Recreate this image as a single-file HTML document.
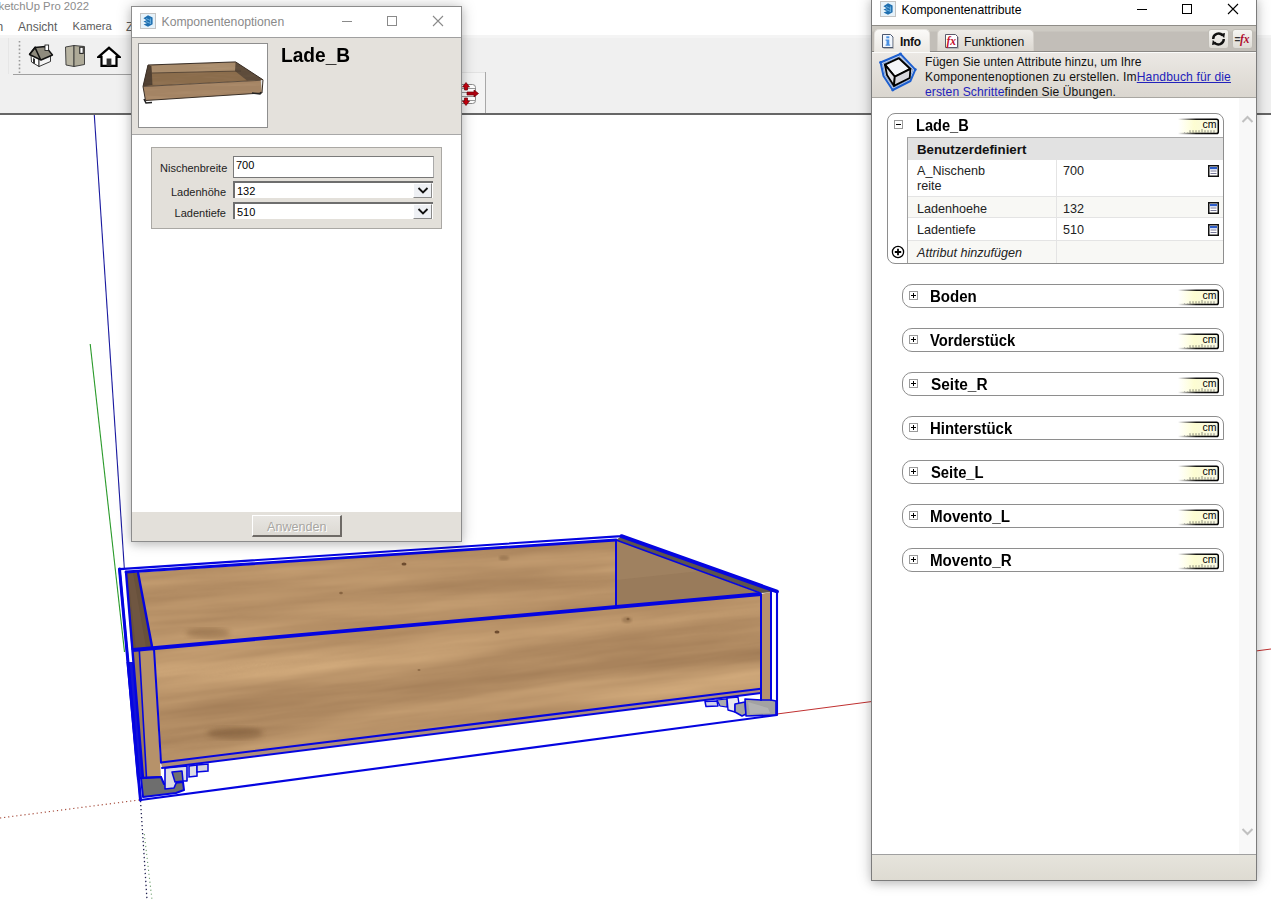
<!DOCTYPE html>
<html><head><meta charset="utf-8">
<style>
*{box-sizing:border-box;margin:0;padding:0}
html,body{width:1271px;height:900px;overflow:hidden;background:#fff;font-family:"Liberation Sans",sans-serif;position:relative}
.a{position:absolute}
.t{position:absolute;white-space:nowrap;line-height:1}
</style></head><body>

<!-- ===== SketchUp main window ===== -->
<div class="t" style="left:-9px;top:1px;font-size:11.3px;color:#8c8c8c">SketchUp Pro 2022</div>
<div class="t" style="left:-3.5px;top:21px;font-size:12px;color:#5c5c5c">n</div>
<div class="t" style="left:18px;top:21px;font-size:12px;color:#5c5c5c">Ansicht</div>
<div class="t" style="left:72.5px;top:21px;font-size:11.2px;color:#5c5c5c">Kamera</div>
<div class="t" style="left:126px;top:21px;font-size:12px;color:#5c5c5c">Z</div>

<!-- toolbar area -->
<div class="a" style="left:0;top:35px;width:1271px;height:79px;background:#f0f0f0"></div>
<div class="a" style="left:8px;top:36px;width:1px;height:38px;background:#e6e6e6"></div>
<div class="a" style="left:13px;top:74px;width:448px;height:1px;background:#a0a0a0"></div><div class="a" style="left:455px;top:72px;width:31px;height:41px;background:#f4f4f4;border-top:1px solid #e2e2e2"></div>
<div class="a" style="left:485px;top:72px;width:1px;height:41px;background:#a8a8a8"></div>
<div class="a" style="left:0;top:113px;width:1271px;height:2px;background:#666"></div><div class="a" style="left:0;top:35px;width:1271px;height:3px;background:#f4f4f4"></div>
<!-- toolbar icons -->
<svg class="a" style="left:18px;top:40px" width="3" height="34" viewBox="0 0 3 34"><path d="M1.5 1 V33" stroke="#9a9a9a" stroke-width="1.6" stroke-dasharray="1.6 2.2"/></svg>
<svg class="a" style="left:28px;top:44px" width="26" height="24" viewBox="0 0 26 24">
  <path d="M3 11 L3.5 18 L11 22.5 L11 14 Z" fill="#fff" stroke="#222" stroke-width="0.9"/>
  <path d="M11 14 L11 22.5 L22.5 17.5 L22.5 11 Z" fill="#f4f4f4" stroke="#222" stroke-width="0.9"/>
  <path d="M5 14 L7 15 L7 20 L5 19 Z" fill="#333"/>
  <path d="M1.5 10.5 L7 3.5 L17.5 2.5 L24.5 11 L13 16 Z" fill="#8f8b7e" stroke="#111" stroke-width="1.4" stroke-linejoin="round"/>
  <path d="M1.5 10.5 L7 3.5 L12.5 15.5" fill="none" stroke="#111" stroke-width="1.6"/>
  <rect x="17" y="1" width="3.6" height="5.5" fill="#fff" stroke="#222" stroke-width="0.9"/>
</svg>
<svg class="a" style="left:64px;top:44px" width="22" height="24" viewBox="0 0 22 24">
  <path d="M1.5 3 L10 1.5 L10 22.5 L2 21 Z" fill="#b9b5a3" stroke="#333" stroke-width="0.9"/>
  <path d="M10 1.5 L20.5 2.5 L20.5 20.5 L10 22.5 Z" fill="#aeaa98" stroke="#333" stroke-width="0.9"/>
  <rect x="15.8" y="3.2" width="3.4" height="6.2" fill="#fff" stroke="#222" stroke-width="1.1"/>
</svg>
<svg class="a" style="left:97px;top:46px" width="24" height="22" viewBox="0 0 24 22">
  <path d="M1.5 10.8 L12 1.8 L22.5 10.8 L19.5 10.8 L19.5 19.8 L4.5 19.8 L4.5 10.8 Z" fill="#fff" stroke="#000" stroke-width="2.2" stroke-linejoin="miter"/>
  <rect x="9.6" y="12.5" width="4.8" height="7.3" fill="#333"/>
</svg>
<svg class="a" style="left:455px;top:80px" width="26" height="28" viewBox="455 80 26 28">
  <rect x="458.5" y="84.5" width="17" height="19" rx="3" fill="#fff" stroke="#8a8a8a" stroke-width="1"/>
  <path d="M459 88.5 H475 M459 92.5 H475 M459 96.5 H475 M459 100.5 H475" stroke="#9a9a9a" stroke-width="1"/>
  <path d="M466 82.5 L469.5 87 L467.5 87 L467.5 90 L464.5 90 L464.5 87 L462.5 87 Z" fill="#d00010" stroke="#700008" stroke-width="0.7"/>
  <path d="M466 105.5 L469.5 101 L467.5 101 L467.5 98 L464.5 98 L464.5 101 L462.5 101 Z" fill="#d00010" stroke="#700008" stroke-width="0.7"/>
  <path d="M478.5 93.5 L474 90 L474 92 L467 92 L467 95 L474 95 L474 97 Z" fill="#b00010" stroke="#700008" stroke-width="0.7"/>
</svg>


<svg class="a" style="left:0;top:0" width="1271" height="900" viewBox="0 0 1271 900">
<defs>
<filter id="woodF" filterUnits="userSpaceOnUse" x="100" y="520" width="700" height="280" color-interpolation-filters="sRGB">
  <feTurbulence type="fractalNoise" baseFrequency="0.0025 0.03" numOctaves="5" seed="11" result="n"/>
  <feColorMatrix in="n" type="matrix" values="0.28 0 0 0 0.585  0.27 0 0 0 0.44  0.22 0 0 0 0.30  0 0 0 0 1"/>
</filter>
<filter id="woodD" filterUnits="userSpaceOnUse" x="100" y="520" width="700" height="280" color-interpolation-filters="sRGB">
  <feTurbulence type="fractalNoise" baseFrequency="0.01 0.05" numOctaves="3" seed="5" result="n"/>
  <feColorMatrix in="n" type="matrix" values="0.4 0 0 0 0.40  0.35 0 0 0 0.30  0.3 0 0 0 0.19  0 0 0 0 1"/>
</filter>
<filter id="blur2"><feGaussianBlur stdDeviation="2.5"/></filter>
<filter id="blur1"><feGaussianBlur stdDeviation="1"/></filter>
<clipPath id="cpFront"><polygon points="154,649 761,594 761,689 161,762.5"/></clipPath>
<clipPath id="cpBack"><polygon points="138,572.5 616,540 616,608 152,649"/></clipPath>
</defs>

<!-- axes -->
<line x1="94.3" y1="115" x2="124.3" y2="568" stroke="#1a1aa0" stroke-width="1.1"/>
<line x1="90.2" y1="344" x2="124.5" y2="652" stroke="#2a9a2a" stroke-width="1.1"/>
<line x1="777" y1="714" x2="1271" y2="649" stroke="#c03030" stroke-width="1"/>
<line x1="0" y1="818" x2="139" y2="800" stroke="#a85040" stroke-width="1.2" stroke-dasharray="1.2 2.9"/>
<line x1="140.5" y1="801" x2="147" y2="900" stroke="#202050" stroke-width="1.3" stroke-dasharray="1.3 2.7"/>
<line x1="144.3" y1="834" x2="152" y2="900" stroke="#70a070" stroke-width="1.1" stroke-dasharray="1.2 2.8"/>

<!-- back panel inner face (textured) -->
<g clip-path="url(#cpBack)">
  <g transform="rotate(-4.2 400 600)"><rect x="100" y="520" width="700" height="280" filter="url(#woodF)"/></g>
  <ellipse cx="208" cy="633" rx="22" ry="5" fill="#6a4a2a" opacity="0.35" filter="url(#blur2)"/>
  <ellipse cx="404" cy="564" rx="2.5" ry="1.5" fill="#5a3a20" opacity="0.8"/>
  <ellipse cx="341" cy="593" rx="1.8" ry="1.2" fill="#6a4a2a" opacity="0.6"/>
  <ellipse cx="504" cy="558" rx="5" ry="2.5" fill="#7a5a3a" opacity="0.4" filter="url(#blur1)"/>
</g>
<!-- right side inner face -->
<polygon points="616,540 757,592 761,594 616,608" fill="#997b5b"/>
<polygon points="616,540 700,571 616,580" fill="#a58866" opacity="0.5"/>
<!-- right side top face -->
<polygon points="621.5,536 777,591.5 761,593 616,540" fill="#5e544c"/>
<!-- left side inner face (dark) -->
<polygon points="126,572 138,572.5 152,649 131.5,650" fill="#68513c"/>
<polygon points="128,573 133,573 146,648 136,649" fill="#745a44" opacity="0.6"/>
<!-- front panel (textured) -->
<g clip-path="url(#cpFront)">
  <g transform="rotate(-6.5 460 680)"><rect x="100" y="520" width="700" height="280" filter="url(#woodF)"/></g>
  <ellipse cx="235" cy="733" rx="28" ry="6" fill="#6a4a2a" opacity="0.4" filter="url(#blur2)"/>
  <ellipse cx="497" cy="632" rx="2.5" ry="1.6" fill="#5a3a20" opacity="0.8"/>
  <ellipse cx="627" cy="620" rx="5" ry="3" fill="#7a5a3a" opacity="0.4" filter="url(#blur1)"/><ellipse cx="628" cy="619" rx="1.5" ry="1.2" fill="#6a4a2a" opacity="0.6"/>
  <ellipse cx="419" cy="670" rx="1.5" ry="1" fill="#6a4a2a" opacity="0.5"/>
</g>
<!-- bottom strip -->
<polygon points="161,762.5 761,688.8 761,693 162,768" fill="#ae8e7a"/>
<!-- left side front edge strip -->
<polygon points="139.3,650 154,649 161,778 146.5,778" fill="#b6926a"/>
<polygon points="132.5,650 139.3,650 146.5,778 143,778" fill="#9a7a5a"/>
<!-- right side front strip -->
<polygon points="761,594 771,592 771,700 761,700" fill="#b5906e"/>
<!-- left bluish region -->
<polygon points="126.5,662 133.6,662 143,778 137,780" fill="#1414d8"/>

<!-- rails -->
<polygon points="141,778 161,777 164,784 183,782 184,790 176,793 143,797" fill="#6e6e6e" stroke="#0505e0" stroke-width="2" stroke-linejoin="round"/>
<polygon points="165,768 187,766 187,781 177,781 174,788 165,789" fill="#dcdce4" stroke="#0505e0" stroke-width="1.6" stroke-linejoin="round"/>
<polygon points="172,772 182,771 183,781 175,782" fill="#707070" stroke="#0505e0" stroke-width="1.5" stroke-linejoin="round"/>
<polygon points="189,766 197,765 197,776 189,777" fill="#dcdce4" stroke="#0505e0" stroke-width="1.5"/>
<polygon points="197,765 208,764 208,771 197,772" fill="#d4d4dc" stroke="#0505e0" stroke-width="1.5"/>
<polygon points="705,701.5 717,701 718,706 706,706.5" fill="#cfcfe8" stroke="#0505e0" stroke-width="1.5" stroke-linejoin="round"/>
<polygon points="717,700 727,699 727,707 720,706" fill="#acacac" stroke="#0505e0" stroke-width="1.2"/>
<polygon points="727,698 738,697 739,704 735,705 735,712 728,710" fill="#e8e8f0" stroke="#0505e0" stroke-width="1.4" stroke-linejoin="round"/>
<polygon points="735,704 745,702 746,714 742,716 735,712" fill="#a4a4a4" stroke="#0505e0" stroke-width="1.6" stroke-linejoin="round"/>
<polygon points="745,699 761,700 771,700 776,701 776,715 746,716" fill="#a2a2a2" stroke="#0505e0" stroke-width="1.6" stroke-linejoin="round"/>
<polygon points="748,702 768,708 770,713 750,714" fill="#bcbcbc" opacity="0.6"/>
<g stroke="#0505e0" fill="none" stroke-linecap="round" stroke-linejoin="round">
  <!-- bbox -->
  <polyline points="621.5,536.1 777,591.5 777,715 140.5,800 119.5,569.1 621.5,536.1" stroke-width="2.1"/>
  <line x1="621.5" y1="536.1" x2="777" y2="591.5" stroke-width="3.8"/>
  <line x1="119.5" y1="569.1" x2="140.5" y2="800" stroke-width="3"/>
  <line x1="126" y1="572" x2="616" y2="540" stroke-width="2.8"/>
  <line x1="616" y1="540" x2="759" y2="592.5" stroke-width="1.7"/>
  <line x1="133" y1="650" x2="761" y2="594" stroke-width="3.8" stroke-linecap="butt"/>
  <line x1="616" y1="540" x2="616" y2="607" stroke-width="2"/>
  <line x1="138" y1="572.5" x2="152.5" y2="649" stroke-width="2.4"/>
  <line x1="126" y1="572" x2="143" y2="778" stroke-width="2.4"/>
  <line x1="154" y1="649" x2="161" y2="762.5" stroke-width="2"/>
  <line x1="161" y1="762.5" x2="761" y2="688.8" stroke-width="2"/>
  <line x1="162" y1="768" x2="761" y2="693" stroke-width="2"/>
  <line x1="761" y1="594" x2="761" y2="700" stroke-width="2"/>
  <line x1="771" y1="592" x2="771" y2="700" stroke-width="2"/>
  <line x1="139.3" y1="650" x2="146.5" y2="778" stroke-width="1.6"/>
  <line x1="141" y1="778" x2="161" y2="777" stroke-width="2"/>
</g>
</svg>



<!-- ===== Komponentenoptionen dialog ===== -->
<div class="a" style="left:131px;top:6px;width:331px;height:536px;box-shadow:0 0 14px rgba(0,0,0,0.22), 0 3px 8px rgba(0,0,0,0.12);background:#fff;border:1px solid #8c8c8c"></div>
<div class="a" style="left:132px;top:7px;width:329px;height:30px;background:#fff"></div>
<svg class="a" style="left:140px;top:13px" width="16" height="16" viewBox="0 0 16 16">
  <rect x="0.5" y="0.5" width="15" height="15" fill="#e6f2fa" stroke="#c4c4c4"/>
  <path d="M8 2.3 L12.6 4.6 L12.6 11.2 L8 13.7 L3.6 11.6 L6.8 10.2 L3.4 8.6 L6.6 7.2 L3.4 5.2 Z" fill="#1f6fb0"/>
  <path d="M6 5.5 L10.5 7.6 M6 8.6 L10.5 10.4 M10.6 5.4 L10.6 11" stroke="#7fc0ea" stroke-width="0.8" fill="none"/>
</svg>
<div class="t" style="left:161.5px;top:15.5px;font-size:12.2px;color:#8a8a8a">Komponentenoptionen</div>
<!-- title buttons -->
<div class="a" style="left:342px;top:21px;width:10px;height:1px;background:#8a8a8a"></div>
<div class="a" style="left:387px;top:16px;width:10px;height:10px;border:1px solid #8a8a8a"></div>
<svg class="a" style="left:432px;top:15px" width="12" height="12" viewBox="0 0 12 12"><path d="M1 1 L11 11 M11 1 L1 11" stroke="#8a8a8a" stroke-width="1.1"/></svg>
<div class="a" style="left:132px;top:37px;width:329px;height:1px;background:#a0a0a0"></div>
<!-- header -->
<div class="a" style="left:132px;top:38px;width:329px;height:96px;background:#e4e1dc"></div>
<div class="a" style="left:138px;top:43px;width:130px;height:85px;background:#fff;border:1px solid #8e8e8e"></div>
<svg class="a" style="left:138px;top:43px" width="130" height="85" viewBox="0 0 130 85">
  <defs>
    <filter id="thw" filterUnits="userSpaceOnUse" x="0" y="10" width="130" height="55" color-interpolation-filters="sRGB">
      <feTurbulence type="fractalNoise" baseFrequency="0.02 0.25" numOctaves="3" seed="3"/>
      <feColorMatrix type="matrix" values="0 0 0 0.9 -0.45  0 0 0 0.9 -0.45  0 0 0 0.9 -0.45  0 0 0 0 0.35"/>
      <feComposite in2="SourceGraphic" operator="in"/>
    </filter>
  </defs>
  <polygon points="10,22 97.6,18.9 125,36.8 122.7,37.3 5,43.5" fill="#9c7a56"/>
  <polygon points="12,22.5 97,19.5 103,28 14,30" fill="#bc9c78"/>
  <polygon points="97.6,18.9 125,36.8 109,37.5 97,28" fill="#6a5642"/>
  <polygon points="5,43.5 10,22 13,23 14,42" fill="#5a4838"/>
  <polygon points="5,43.5 122.7,37.3 124,50 7.5,57.5" fill="#b89470"/>
  <g filter="url(#thw)" opacity="0.3"><polygon points="5,43.5 10,22 97.6,18.9 125,36.8 124,50 7.5,57.5" fill="#000"/></g>
  <path d="M10 22 L97.6 18.9 L125 36.8 L124 50 L7.5 57.5 L5 43.5 Z" fill="none" stroke="#3a3028" stroke-width="1"/>
  <path d="M5 43.5 L122.7 37.3 M13 23 L14 42 M14 30 L103 28" stroke="#4a3c30" stroke-width="0.8" fill="none"/>
  <path d="M6 56 L8 60 L14 59.5" stroke="#222" stroke-width="1.6" fill="none"/>
  <path d="M114 50 L122 51 L123 49" stroke="#222" stroke-width="1.6" fill="none"/>
</svg>
<div class="t" style="left:281px;top:45px;font-size:20.5px;font-weight:bold;color:#000;transform:scaleX(0.934);transform-origin:0 0">Lade_B</div>
<div class="a" style="left:132px;top:134px;width:329px;height:1px;background:#a8a8a8"></div>
<!-- form -->
<div class="a" style="left:151px;top:147px;width:291px;height:82px;background:#e3e0da;border:1px solid #aaa8a4"></div>
<div class="t" style="left:160px;top:163px;font-size:11px;color:#222;width:66px;text-align:right">Nischenbreite</div>
<div class="t" style="left:160px;top:187px;font-size:11px;color:#222;width:66px;text-align:right">Ladenhöhe</div>
<div class="t" style="left:160px;top:208px;font-size:11px;color:#222;width:66px;text-align:right">Ladentiefe</div>
<div class="a" style="left:233px;top:156px;width:201px;height:22px;background:#fff;border:1px solid #7a7a7a;border-right-color:#aaa;border-bottom-color:#777"></div>
<div class="t" style="left:236px;top:160px;font-size:11px;color:#000">700</div>
<div class="a" style="left:233px;top:181px;width:200px;height:17px;background:#fff;border-top:2px solid #6e6e6e;border-left:2px solid #6e6e6e"></div>
<div class="a" style="left:413px;top:183px;width:19px;height:15px;background:#eef0f4;border:1px solid #8a8a8a;border-top-color:#fff;border-left-color:#fff"></div>
<svg class="a" style="left:417px;top:186px" width="12" height="9" viewBox="0 0 12 9"><path d="M1.5 2 L6 6.5 L10.5 2" stroke="#111" stroke-width="1.8" fill="none"/></svg>
<div class="t" style="left:237px;top:186px;font-size:11px;color:#000">132</div>
<div class="a" style="left:233px;top:202px;width:200px;height:17px;background:#fff;border-top:2px solid #6e6e6e;border-left:2px solid #6e6e6e"></div>
<div class="a" style="left:413px;top:204px;width:19px;height:15px;background:#eef0f4;border:1px solid #8a8a8a;border-top-color:#fff;border-left-color:#fff"></div>
<svg class="a" style="left:417px;top:207px" width="12" height="9" viewBox="0 0 12 9"><path d="M1.5 2 L6 6.5 L10.5 2" stroke="#111" stroke-width="1.8" fill="none"/></svg>
<div class="t" style="left:237px;top:207px;font-size:11px;color:#000">510</div>
<!-- footer -->
<div class="a" style="left:132px;top:511.5px;width:329px;height:29.5px;background:#e3e0da"></div>
<div class="a" style="left:252px;top:515px;width:90px;height:22px;background:linear-gradient(#e8e6e2,#dcd9d3);border:1px solid #fff;border-right:2px solid #6e6a66;border-bottom:2px solid #6e6a66"></div>
<div class="t" style="left:267px;top:520.5px;font-size:12.6px;color:#a8a6a2;text-shadow:1px 1px 0 #fff">Anwenden</div>

<!-- ===== Komponentenattribute panel ===== -->
<div class="a" style="left:871px;top:-2px;width:386px;height:883px;background:#fff;border:1px solid #7c7c7c;box-shadow:0 0 14px rgba(0,0,0,0.22), 0 3px 8px rgba(0,0,0,0.12)"></div>
<svg class="a" style="left:880px;top:1px" width="16" height="16" viewBox="0 0 16 16">
  <rect x="0.5" y="0.5" width="15" height="15" fill="#e6f2fa" stroke="#c4c4c4"/>
  <path d="M8 2.3 L12.6 4.6 L12.6 11.2 L8 13.7 L3.6 11.6 L6.8 10.2 L3.4 8.6 L6.6 7.2 L3.4 5.2 Z" fill="#1f6fb0"/>
  <path d="M6 5.5 L10.5 7.6 M6 8.6 L10.5 10.4 M10.6 5.4 L10.6 11" stroke="#7fc0ea" stroke-width="0.8" fill="none"/>
</svg>
<div class="t" style="left:901.5px;top:4px;font-size:12.2px;color:#000">Komponentenattribute</div>
<div class="a" style="left:1137px;top:9px;width:10px;height:1px;background:#000"></div>
<div class="a" style="left:1182px;top:4px;width:10px;height:10px;border:1px solid #000"></div>
<svg class="a" style="left:1227px;top:3px" width="12" height="12" viewBox="0 0 12 12"><path d="M1 1 L11 11 M11 1 L1 11" stroke="#000" stroke-width="1.1"/></svg>

<!-- tab bar -->
<div class="a" style="left:872px;top:25px;width:384px;height:27px;background:linear-gradient(#cdcac3 0,#cdcac3 5px,#c2beb8 6px,#c2beb8 100%);border-top:1px solid #8f8d88;border-bottom:1px solid #8a8884"></div>
<div class="a" style="left:874px;top:29px;width:56px;height:24px;border-radius:5px 5px 0 0;background:linear-gradient(#fbfaf8,#ebe8e3);border:1px solid #e6e3de;border-bottom:none"></div>
<div class="a" style="left:937px;top:29px;width:97px;height:22px;border-radius:5px 5px 0 0;background:linear-gradient(#efede9,#dcd8d1);border:1px solid #d4d0ca;border-bottom:none"></div>
<svg class="a" style="left:881px;top:33px" width="14" height="16" viewBox="0 0 14 16">
  <path d="M1.5 1.5 H9.5 L12 4 V14.5 H1.5 Z" fill="#f2f7fd" stroke="#4c5870" stroke-width="1"/>
  <path d="M12.5 4.5 V15.5 H2.5" stroke="#b8b8b8" stroke-width="1" fill="none"/>
  <rect x="5.3" y="3.3" width="3" height="2" fill="#4a90e2"/>
  <path d="M4.6 6.6 H8.3 V11.6 H9.2 V12.8 H4.6 V11.6 H5.5 V7.8 H4.6 Z" fill="#4a90e2"/>
</svg>
<div class="t" style="left:900px;top:36px;font-size:12px;font-weight:bold;color:#111;letter-spacing:-0.3px">Info</div>
<svg class="a" style="left:944px;top:33px" width="16" height="16" viewBox="0 0 16 16">
  <path d="M1.5 1.5 H11.5 L13.5 3.5 V14.5 H1.5 Z" fill="#fff" stroke="#5a5a6a" stroke-width="1"/>
  <path d="M14.5 4 V15.5 H2.5" stroke="#b8b8b8" stroke-width="1" fill="none"/>
  <text x="2.4" y="11.8" font-family="Liberation Serif" font-style="italic" font-weight="bold" font-size="11.5" fill="#c41030">fx</text>
</svg>
<div class="t" style="left:964px;top:36px;font-size:12.2px;color:#111">Funktionen</div>
<!-- refresh / fx buttons -->
<div class="a" style="left:1208px;top:29px;width:21px;height:20px;border-radius:3px;background:linear-gradient(#f6f5f2,#dedbd5);border:1px solid #c0bdb6"></div>
<svg class="a" style="left:1210px;top:31px" width="17" height="16" viewBox="0 0 17 16">
  <path d="M3.2 8 A5.3 5.3 0 0 1 12.6 4.6" stroke="#111" stroke-width="2.4" fill="none"/>
  <path d="M13.8 8 A5.3 5.3 0 0 1 4.4 11.4" stroke="#111" stroke-width="2.4" fill="none"/>
  <path d="M10.2 3 L15 2 L14.2 7 Z" fill="#111"/><path d="M6.8 13 L2 14 L2.8 9 Z" fill="#111"/>
</svg>
<div class="a" style="left:1232px;top:29px;width:21px;height:20px;border-radius:3px;background:linear-gradient(#f6f5f2,#dedbd5);border:1px solid #c0bdb6"></div>
<svg class="a" style="left:1233px;top:31px" width="19" height="16" viewBox="0 0 19 16">
  <text x="1.5" y="12" font-family="Liberation Sans" font-weight="bold" font-size="10" fill="#333">=</text><text x="7" y="12" font-family="Liberation Serif" font-style="italic" font-weight="bold" font-size="11.5" fill="#b01030">fx</text>
</svg>

<!-- info header -->
<div class="a" style="left:872px;top:52px;width:384px;height:46px;background:linear-gradient(#ebe8e4,#dad6cf);border-top:1px solid #fbfbfa;border-bottom:1px solid #a9a7a2"></div>
<svg class="a" style="left:877px;top:51px" width="42" height="42" viewBox="877 51 42 42">
  <path d="M880.6 62.5 L900.5 54 L915.3 69.6 L910.4 81 L892.7 90 L883.5 76 Z" fill="none" stroke="#1d5fd0" stroke-width="2" stroke-linejoin="round"/>
  <path d="M882.5 64 L900 56.5 L913 70 L909 79.5 L893.5 87.5 L885 75 Z" fill="none" stroke="#5a90e8" stroke-width="0.8"/>
  <path d="M884.9 64.6 L899 58.2 L910.4 68.9 L894.8 76.7 Z" fill="#f4f6fa" stroke="#000" stroke-width="2" stroke-linejoin="round"/>
  <path d="M884.9 64.6 L894.8 76.7 L894 85.9 L887 75 Z" fill="#e2e2e6" stroke="#000" stroke-width="1.8" stroke-linejoin="round"/>
  <path d="M894.8 76.7 L910.4 68.9 L909.7 78 L894 85.9 Z" fill="#d6d6dc" stroke="#000" stroke-width="1.8" stroke-linejoin="round"/>
  <circle cx="900.5" cy="54" r="1.4" fill="#1d5fd0"/><circle cx="915.3" cy="69.6" r="1.4" fill="#1d5fd0"/><circle cx="892.7" cy="90" r="1.4" fill="#1d5fd0"/><circle cx="880.6" cy="62.5" r="1.4" fill="#1d5fd0"/>
</svg>
<div class="a" style="left:925px;top:55px;width:320px;font-size:12.1px;line-height:15px;color:#111">Fügen Sie unten Attribute hinzu, um Ihre<br><span style="letter-spacing:0.13px">Komponentenoptionen zu erstellen. Im<span style="color:#2222bb;text-decoration:underline">Handbuch für die</span></span><br><span style="letter-spacing:0.1px"><span style="color:#2222bb">ersten Schritte</span>finden Sie Übungen.</span></div>

<!-- scrollbar -->
<div class="a" style="left:1239px;top:98px;width:17px;height:756px;background:#f8f8f8"></div>
<svg class="a" style="left:1241px;top:114px" width="13" height="10" viewBox="0 0 13 10"><path d="M1.5 8 L6.5 3 L11.5 8" stroke="#c0c0c0" stroke-width="2" fill="none"/></svg>
<svg class="a" style="left:1241px;top:827px" width="13" height="10" viewBox="0 0 13 10"><path d="M1.5 2 L6.5 7 L11.5 2" stroke="#c0c0c0" stroke-width="2" fill="none"/></svg>
<!-- status bar -->
<div class="a" style="left:872px;top:854px;width:384px;height:26px;background:linear-gradient(#e6e4dc,#dedbd2);border-top:1px solid #a0a0a0"></div>

<div class="a" style="left:887px;top:113px;width:337px;height:151px;border:1px solid #8e8e8e;border-radius:8px 8px 0 8px;background:#fff"></div>
<div class="a" style="left:894px;top:120px;width:9px;height:9px;border:1px solid #9a9a9a;background:#fff"></div><div class="a" style="left:896px;top:124px;width:5px;height:1px;background:#000"></div>
<div class="t" style="left:915.5px;top:117.5px;font-size:16px;font-weight:bold;color:#000;transform:scaleX(0.913);transform-origin:0 0">Lade_B</div>
<svg class="a" style="left:1176px;top:118px" width="44" height="17" viewBox="0 0 44 17">
<defs><linearGradient id="gb117" x1="0" x2="1"><stop offset="0" stop-color="#000" stop-opacity="0"/><stop offset="0.45" stop-color="#000" stop-opacity="0.9"/><stop offset="1" stop-color="#000"/></linearGradient>
<linearGradient id="gf117" x1="0" x2="1"><stop offset="0" stop-color="#ffffd8" stop-opacity="0"/><stop offset="0.4" stop-color="#fdfdd2"/><stop offset="1" stop-color="#f6f6e4"/></linearGradient></defs>
<path d="M2 1.2 H40.5 Q42.3 1.2 42.3 3 V13.8 Q42.3 15.6 40.5 15.6 H2" fill="url(#gf117)" stroke="url(#gb117)" stroke-width="1.5"/>
<path d="M8 14.6 H41" stroke="#999" stroke-width="0.8" stroke-dasharray="1 2.2" opacity="0.8"/>
<path d="M14 12.2 V14.8 M17 12.2 V14.8 M20 12.2 V14.8 M23 12.2 V14.8 M26 11 V14.8 M29 12.2 V14.8 M32 12.2 V14.8 M35 12.2 V14.8 M38 12.2 V14.8" stroke="#444" stroke-width="0.6"/>
<text x="40.5" y="10" text-anchor="end" font-family="Liberation Sans" font-size="10.5" fill="#000">cm</text>
</svg>
<div class="a" style="left:907px;top:137px;width:316px;height:126px;border-top:1px solid #a8a8a8;border-left:1px solid #a0a0a0;background:#fff"></div>
<div class="a" style="left:908px;top:138px;width:315px;height:22px;background:#e2e2e2"></div>
<div class="t" style="left:917px;top:142.8px;font-size:13.3px;font-weight:bold;color:#111">Benutzerdefiniert</div>
<div class="a" style="left:908px;top:196px;width:315px;height:22px;background:#f8f8f5;border-top:1px solid #e4e4e4;border-bottom:1px solid #e4e4e4"></div>
<div class="a" style="left:908px;top:240px;width:315px;height:23px;background:#f8f8f5;border-top:1px solid #e4e4e4"></div>
<div class="a" style="left:1056px;top:160px;width:1px;height:103px;background:#e4e4e4"></div>
<div class="t" style="left:917px;top:165px;font-size:12.6px;color:#222">A_Nischenb</div>
<div class="t" style="left:917px;top:180px;font-size:12.6px;color:#222">reite</div>
<div class="t" style="left:917px;top:202.5px;font-size:12.6px;color:#222">Ladenhoehe</div>
<div class="t" style="left:917px;top:223.7px;font-size:12.6px;color:#222">Ladentiefe</div>
<div class="t" style="left:1063px;top:165px;font-size:12.6px;color:#222">700</div>
<div class="t" style="left:1063px;top:202.5px;font-size:12.6px;color:#222">132</div>
<div class="t" style="left:1063px;top:223.7px;font-size:12.6px;color:#222">510</div>
<div class="t" style="left:917px;top:247px;font-size:12.6px;font-style:italic;color:#222">Attribut hinzufügen</div>
<svg class="a" style="left:1208px;top:165px" width="11" height="12" viewBox="0 0 11 12">
<rect x="0.75" y="0.75" width="9.5" height="10.5" fill="#fff" stroke="#111" stroke-width="1.5"/>
<rect x="2" y="2" width="7" height="2.2" fill="#2c5cc8"/>
<path d="M2.5 6 H8.5 M2.5 8.5 H8.5" stroke="#7a7a9a" stroke-width="1"/>
</svg>
<svg class="a" style="left:1208px;top:202px" width="11" height="12" viewBox="0 0 11 12">
<rect x="0.75" y="0.75" width="9.5" height="10.5" fill="#fff" stroke="#111" stroke-width="1.5"/>
<rect x="2" y="2" width="7" height="2.2" fill="#2c5cc8"/>
<path d="M2.5 6 H8.5 M2.5 8.5 H8.5" stroke="#7a7a9a" stroke-width="1"/>
</svg>
<svg class="a" style="left:1208px;top:224px" width="11" height="12" viewBox="0 0 11 12">
<rect x="0.75" y="0.75" width="9.5" height="10.5" fill="#fff" stroke="#111" stroke-width="1.5"/>
<rect x="2" y="2" width="7" height="2.2" fill="#2c5cc8"/>
<path d="M2.5 6 H8.5 M2.5 8.5 H8.5" stroke="#7a7a9a" stroke-width="1"/>
</svg>
<svg class="a" style="left:891px;top:245px" width="14" height="14" viewBox="0 0 14 14"><circle cx="7" cy="7" r="5.6" fill="#fff" stroke="#000" stroke-width="1.3"/><path d="M7 3.8 V10.2 M3.8 7 H10.2" stroke="#000" stroke-width="1.8"/></svg>
<div class="a" style="left:902px;top:284px;width:322px;height:24px;border:1px solid #8e8e8e;border-radius:10px 8px 0 10px;background:#fff"></div>
<div class="a" style="left:909px;top:291px;width:9px;height:9px;border:1px solid #9a9a9a;background:#fff"></div><div class="a" style="left:911px;top:295px;width:5px;height:1px;background:#000"></div><div class="a" style="left:913px;top:293px;width:1px;height:5px;background:#000"></div>
<div class="t" style="left:930px;top:288.5px;font-size:16px;font-weight:bold;color:#000;transform:scaleX(0.940);transform-origin:0 0">Boden</div>
<svg class="a" style="left:1176px;top:289px" width="44" height="17" viewBox="0 0 44 17">
<defs><linearGradient id="gb288" x1="0" x2="1"><stop offset="0" stop-color="#000" stop-opacity="0"/><stop offset="0.45" stop-color="#000" stop-opacity="0.9"/><stop offset="1" stop-color="#000"/></linearGradient>
<linearGradient id="gf288" x1="0" x2="1"><stop offset="0" stop-color="#ffffd8" stop-opacity="0"/><stop offset="0.4" stop-color="#fdfdd2"/><stop offset="1" stop-color="#f6f6e4"/></linearGradient></defs>
<path d="M2 1.2 H40.5 Q42.3 1.2 42.3 3 V13.8 Q42.3 15.6 40.5 15.6 H2" fill="url(#gf288)" stroke="url(#gb288)" stroke-width="1.5"/>
<path d="M8 14.6 H41" stroke="#999" stroke-width="0.8" stroke-dasharray="1 2.2" opacity="0.8"/>
<path d="M14 12.2 V14.8 M17 12.2 V14.8 M20 12.2 V14.8 M23 12.2 V14.8 M26 11 V14.8 M29 12.2 V14.8 M32 12.2 V14.8 M35 12.2 V14.8 M38 12.2 V14.8" stroke="#444" stroke-width="0.6"/>
<text x="40.5" y="10" text-anchor="end" font-family="Liberation Sans" font-size="10.5" fill="#000">cm</text>
</svg>
<div class="a" style="left:902px;top:328px;width:322px;height:24px;border:1px solid #8e8e8e;border-radius:10px 8px 0 10px;background:#fff"></div>
<div class="a" style="left:909px;top:335px;width:9px;height:9px;border:1px solid #9a9a9a;background:#fff"></div><div class="a" style="left:911px;top:339px;width:5px;height:1px;background:#000"></div><div class="a" style="left:913px;top:337px;width:1px;height:5px;background:#000"></div>
<div class="t" style="left:930px;top:332.5px;font-size:16px;font-weight:bold;color:#000;transform:scaleX(0.925);transform-origin:0 0">Vorderstück</div>
<svg class="a" style="left:1176px;top:333px" width="44" height="17" viewBox="0 0 44 17">
<defs><linearGradient id="gb332" x1="0" x2="1"><stop offset="0" stop-color="#000" stop-opacity="0"/><stop offset="0.45" stop-color="#000" stop-opacity="0.9"/><stop offset="1" stop-color="#000"/></linearGradient>
<linearGradient id="gf332" x1="0" x2="1"><stop offset="0" stop-color="#ffffd8" stop-opacity="0"/><stop offset="0.4" stop-color="#fdfdd2"/><stop offset="1" stop-color="#f6f6e4"/></linearGradient></defs>
<path d="M2 1.2 H40.5 Q42.3 1.2 42.3 3 V13.8 Q42.3 15.6 40.5 15.6 H2" fill="url(#gf332)" stroke="url(#gb332)" stroke-width="1.5"/>
<path d="M8 14.6 H41" stroke="#999" stroke-width="0.8" stroke-dasharray="1 2.2" opacity="0.8"/>
<path d="M14 12.2 V14.8 M17 12.2 V14.8 M20 12.2 V14.8 M23 12.2 V14.8 M26 11 V14.8 M29 12.2 V14.8 M32 12.2 V14.8 M35 12.2 V14.8 M38 12.2 V14.8" stroke="#444" stroke-width="0.6"/>
<text x="40.5" y="10" text-anchor="end" font-family="Liberation Sans" font-size="10.5" fill="#000">cm</text>
</svg>
<div class="a" style="left:902px;top:372px;width:322px;height:24px;border:1px solid #8e8e8e;border-radius:10px 8px 0 10px;background:#fff"></div>
<div class="a" style="left:909px;top:379px;width:9px;height:9px;border:1px solid #9a9a9a;background:#fff"></div><div class="a" style="left:911px;top:383px;width:5px;height:1px;background:#000"></div><div class="a" style="left:913px;top:381px;width:1px;height:5px;background:#000"></div>
<div class="t" style="left:931px;top:376.5px;font-size:16px;font-weight:bold;color:#000;transform:scaleX(0.963);transform-origin:0 0">Seite_R</div>
<svg class="a" style="left:1176px;top:377px" width="44" height="17" viewBox="0 0 44 17">
<defs><linearGradient id="gb376" x1="0" x2="1"><stop offset="0" stop-color="#000" stop-opacity="0"/><stop offset="0.45" stop-color="#000" stop-opacity="0.9"/><stop offset="1" stop-color="#000"/></linearGradient>
<linearGradient id="gf376" x1="0" x2="1"><stop offset="0" stop-color="#ffffd8" stop-opacity="0"/><stop offset="0.4" stop-color="#fdfdd2"/><stop offset="1" stop-color="#f6f6e4"/></linearGradient></defs>
<path d="M2 1.2 H40.5 Q42.3 1.2 42.3 3 V13.8 Q42.3 15.6 40.5 15.6 H2" fill="url(#gf376)" stroke="url(#gb376)" stroke-width="1.5"/>
<path d="M8 14.6 H41" stroke="#999" stroke-width="0.8" stroke-dasharray="1 2.2" opacity="0.8"/>
<path d="M14 12.2 V14.8 M17 12.2 V14.8 M20 12.2 V14.8 M23 12.2 V14.8 M26 11 V14.8 M29 12.2 V14.8 M32 12.2 V14.8 M35 12.2 V14.8 M38 12.2 V14.8" stroke="#444" stroke-width="0.6"/>
<text x="40.5" y="10" text-anchor="end" font-family="Liberation Sans" font-size="10.5" fill="#000">cm</text>
</svg>
<div class="a" style="left:902px;top:416px;width:322px;height:24px;border:1px solid #8e8e8e;border-radius:10px 8px 0 10px;background:#fff"></div>
<div class="a" style="left:909px;top:423px;width:9px;height:9px;border:1px solid #9a9a9a;background:#fff"></div><div class="a" style="left:911px;top:427px;width:5px;height:1px;background:#000"></div><div class="a" style="left:913px;top:425px;width:1px;height:5px;background:#000"></div>
<div class="t" style="left:930px;top:420.5px;font-size:16px;font-weight:bold;color:#000;transform:scaleX(0.934);transform-origin:0 0">Hinterstück</div>
<svg class="a" style="left:1176px;top:421px" width="44" height="17" viewBox="0 0 44 17">
<defs><linearGradient id="gb420" x1="0" x2="1"><stop offset="0" stop-color="#000" stop-opacity="0"/><stop offset="0.45" stop-color="#000" stop-opacity="0.9"/><stop offset="1" stop-color="#000"/></linearGradient>
<linearGradient id="gf420" x1="0" x2="1"><stop offset="0" stop-color="#ffffd8" stop-opacity="0"/><stop offset="0.4" stop-color="#fdfdd2"/><stop offset="1" stop-color="#f6f6e4"/></linearGradient></defs>
<path d="M2 1.2 H40.5 Q42.3 1.2 42.3 3 V13.8 Q42.3 15.6 40.5 15.6 H2" fill="url(#gf420)" stroke="url(#gb420)" stroke-width="1.5"/>
<path d="M8 14.6 H41" stroke="#999" stroke-width="0.8" stroke-dasharray="1 2.2" opacity="0.8"/>
<path d="M14 12.2 V14.8 M17 12.2 V14.8 M20 12.2 V14.8 M23 12.2 V14.8 M26 11 V14.8 M29 12.2 V14.8 M32 12.2 V14.8 M35 12.2 V14.8 M38 12.2 V14.8" stroke="#444" stroke-width="0.6"/>
<text x="40.5" y="10" text-anchor="end" font-family="Liberation Sans" font-size="10.5" fill="#000">cm</text>
</svg>
<div class="a" style="left:902px;top:460px;width:322px;height:24px;border:1px solid #8e8e8e;border-radius:10px 8px 0 10px;background:#fff"></div>
<div class="a" style="left:909px;top:467px;width:9px;height:9px;border:1px solid #9a9a9a;background:#fff"></div><div class="a" style="left:911px;top:471px;width:5px;height:1px;background:#000"></div><div class="a" style="left:913px;top:469px;width:1px;height:5px;background:#000"></div>
<div class="t" style="left:931px;top:464.5px;font-size:16px;font-weight:bold;color:#000;transform:scaleX(0.925);transform-origin:0 0">Seite_L</div>
<svg class="a" style="left:1176px;top:465px" width="44" height="17" viewBox="0 0 44 17">
<defs><linearGradient id="gb464" x1="0" x2="1"><stop offset="0" stop-color="#000" stop-opacity="0"/><stop offset="0.45" stop-color="#000" stop-opacity="0.9"/><stop offset="1" stop-color="#000"/></linearGradient>
<linearGradient id="gf464" x1="0" x2="1"><stop offset="0" stop-color="#ffffd8" stop-opacity="0"/><stop offset="0.4" stop-color="#fdfdd2"/><stop offset="1" stop-color="#f6f6e4"/></linearGradient></defs>
<path d="M2 1.2 H40.5 Q42.3 1.2 42.3 3 V13.8 Q42.3 15.6 40.5 15.6 H2" fill="url(#gf464)" stroke="url(#gb464)" stroke-width="1.5"/>
<path d="M8 14.6 H41" stroke="#999" stroke-width="0.8" stroke-dasharray="1 2.2" opacity="0.8"/>
<path d="M14 12.2 V14.8 M17 12.2 V14.8 M20 12.2 V14.8 M23 12.2 V14.8 M26 11 V14.8 M29 12.2 V14.8 M32 12.2 V14.8 M35 12.2 V14.8 M38 12.2 V14.8" stroke="#444" stroke-width="0.6"/>
<text x="40.5" y="10" text-anchor="end" font-family="Liberation Sans" font-size="10.5" fill="#000">cm</text>
</svg>
<div class="a" style="left:902px;top:504px;width:322px;height:24px;border:1px solid #8e8e8e;border-radius:10px 8px 0 10px;background:#fff"></div>
<div class="a" style="left:909px;top:511px;width:9px;height:9px;border:1px solid #9a9a9a;background:#fff"></div><div class="a" style="left:911px;top:515px;width:5px;height:1px;background:#000"></div><div class="a" style="left:913px;top:513px;width:1px;height:5px;background:#000"></div>
<div class="t" style="left:930px;top:508.5px;font-size:16px;font-weight:bold;color:#000;transform:scaleX(0.948);transform-origin:0 0">Movento_L</div>
<svg class="a" style="left:1176px;top:509px" width="44" height="17" viewBox="0 0 44 17">
<defs><linearGradient id="gb508" x1="0" x2="1"><stop offset="0" stop-color="#000" stop-opacity="0"/><stop offset="0.45" stop-color="#000" stop-opacity="0.9"/><stop offset="1" stop-color="#000"/></linearGradient>
<linearGradient id="gf508" x1="0" x2="1"><stop offset="0" stop-color="#ffffd8" stop-opacity="0"/><stop offset="0.4" stop-color="#fdfdd2"/><stop offset="1" stop-color="#f6f6e4"/></linearGradient></defs>
<path d="M2 1.2 H40.5 Q42.3 1.2 42.3 3 V13.8 Q42.3 15.6 40.5 15.6 H2" fill="url(#gf508)" stroke="url(#gb508)" stroke-width="1.5"/>
<path d="M8 14.6 H41" stroke="#999" stroke-width="0.8" stroke-dasharray="1 2.2" opacity="0.8"/>
<path d="M14 12.2 V14.8 M17 12.2 V14.8 M20 12.2 V14.8 M23 12.2 V14.8 M26 11 V14.8 M29 12.2 V14.8 M32 12.2 V14.8 M35 12.2 V14.8 M38 12.2 V14.8" stroke="#444" stroke-width="0.6"/>
<text x="40.5" y="10" text-anchor="end" font-family="Liberation Sans" font-size="10.5" fill="#000">cm</text>
</svg>
<div class="a" style="left:902px;top:548px;width:322px;height:24px;border:1px solid #8e8e8e;border-radius:10px 8px 0 10px;background:#fff"></div>
<div class="a" style="left:909px;top:555px;width:9px;height:9px;border:1px solid #9a9a9a;background:#fff"></div><div class="a" style="left:911px;top:559px;width:5px;height:1px;background:#000"></div><div class="a" style="left:913px;top:557px;width:1px;height:5px;background:#000"></div>
<div class="t" style="left:930px;top:552.5px;font-size:16px;font-weight:bold;color:#000;transform:scaleX(0.946);transform-origin:0 0">Movento_R</div>
<svg class="a" style="left:1176px;top:553px" width="44" height="17" viewBox="0 0 44 17">
<defs><linearGradient id="gb552" x1="0" x2="1"><stop offset="0" stop-color="#000" stop-opacity="0"/><stop offset="0.45" stop-color="#000" stop-opacity="0.9"/><stop offset="1" stop-color="#000"/></linearGradient>
<linearGradient id="gf552" x1="0" x2="1"><stop offset="0" stop-color="#ffffd8" stop-opacity="0"/><stop offset="0.4" stop-color="#fdfdd2"/><stop offset="1" stop-color="#f6f6e4"/></linearGradient></defs>
<path d="M2 1.2 H40.5 Q42.3 1.2 42.3 3 V13.8 Q42.3 15.6 40.5 15.6 H2" fill="url(#gf552)" stroke="url(#gb552)" stroke-width="1.5"/>
<path d="M8 14.6 H41" stroke="#999" stroke-width="0.8" stroke-dasharray="1 2.2" opacity="0.8"/>
<path d="M14 12.2 V14.8 M17 12.2 V14.8 M20 12.2 V14.8 M23 12.2 V14.8 M26 11 V14.8 M29 12.2 V14.8 M32 12.2 V14.8 M35 12.2 V14.8 M38 12.2 V14.8" stroke="#444" stroke-width="0.6"/>
<text x="40.5" y="10" text-anchor="end" font-family="Liberation Sans" font-size="10.5" fill="#000">cm</text>
</svg>


</body></html>
